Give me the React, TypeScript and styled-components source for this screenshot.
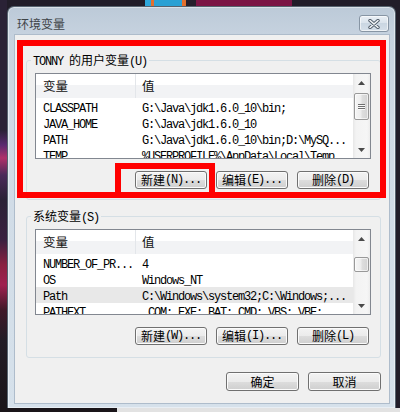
import React from "react";
import styled, { createGlobalStyle } from "styled-components";

const Global = createGlobalStyle`
  html, body { margin: 0; padding: 0; background: #1f1b27; }
  #root { width: 400px; height: 412px; overflow: hidden; }
  *, *::before, *::after { box-sizing: border-box; }
`;

const Desktop = styled.div`
  width: 400px;
  height: 412px;
  padding: 6px 4px 0 7px;
  background-color: #211d29;
  background-image:
    linear-gradient(90deg, transparent 0, transparent 145px, #2da6da 145px, #2da6da 151px, #e3702e 151px, #e3702e 154px, #2aa1d4 154px, #2aa1d4 182px, #e3702e 182px, #e3702e 186px, #261f2c 186px, #261f2c 196px, #7b1545 196px, #7b1545 292px, transparent 292px),
    linear-gradient(90deg, #1a1519 0, #1a1519 117px, #e2e2e2 117px, #e2e2e2 100%),
    linear-gradient(180deg, #2a2236 0, #2a2236 130px, #5a2a70 145px, #b0306a 158px, #4a2a5a 175px, #2a2236 200px, #3a2040 240px, #8a2040 265px, #a02050 285px, #401828 310px, #221c26 340px, #1a1519 100%);
  background-size: 100% 6px, 100% 4px, 7px 100%;
  background-position: left top, left bottom, left top;
  background-repeat: no-repeat;
`;

const Window = styled.div`
  width: 389px;
  height: 402px;
  display: flex;
  flex-direction: column;
  padding: 0 6px 5px 7px;
  border: 1px solid #56636f;
  border-bottom: none;
  border-radius: 7px 7px 0 0;
  background: linear-gradient(180deg, #bccad8 0, #c6d2df 28px, #cfdae5 120px, #d6e1eb 100%);
  box-shadow: inset 0 0 0 1px rgba(255, 255, 255, 0.45);
`;

const TitleBar = styled.div`
  height: 28px;
  flex: none;
  display: flex;
  align-items: flex-start;
  justify-content: space-between;
  padding: 8px 0 0 2px;
`;

const Title = styled.span`
  font-family: "Noto Sans CJK SC", sans-serif;
  font-size: 12px;
  line-height: 17px;
  color: #3e4347;
`;

const CloseButton = styled.div`
  width: 30px;
  height: 17px;
  border: 1px solid #8795a4;
  border-radius: 3px;
  background: linear-gradient(180deg, #e9eff5 0, #d9e2eb 50%, #cad6e2 50%, #d5dfe9 100%);
  box-shadow: inset 0 0 0 1px rgba(255, 255, 255, 0.6);
  display: flex;
  align-items: center;
  justify-content: center;
`;

const Client = styled.div`
  position: relative;
  flex: 1;
  background: #f0f0f0;
  box-shadow: 0 0 0 1px #aebccb;
  padding: 18px 8px 11px 11px;
  display: flex;
  flex-direction: column;
`;

const Group = styled.fieldset<{ $pb: number; $mt: number }>`
  margin: ${(p) => p.$mt}px 0 0 0;
  padding: 6px 9px ${(p) => p.$pb}px 8px;
  border: 1px solid #d5dfe5;
  border-radius: 3px;
  display: flex;
  flex-direction: column;
  gap: 12px;
  min-width: 0;
`;

const Legend = styled.legend`
  margin-left: -4px;
  padding: 0 2px;
  line-height: 14px;
  height: 14px;
  color: #000;
  white-space: nowrap;
`;

const Run = styled.span<{ $cjk: boolean }>`
  font-family: ${(p) => (p.$cjk ? '"Noto Sans CJK SC", sans-serif' : '"Liberation Mono", monospace')};
  font-size: ${(p) => (p.$cjk ? 12 : 12)}px;
  letter-spacing: ${(p) => (p.$cjk ? 0 : -1.2)}px;
`;

function Txt({ children }: { children: string }) {
  const parts = children.match(/[\u3000-\u9fff\uff00-\uffef]+|[^\u3000-\u9fff\uff00-\uffef]+/g) || [];
  return (
    <>
      {parts.map((p, i) => (
        <Run key={i} $cjk={/[\u3000-\u9fff\uff00-\uffef]/.test(p)}>
          {p}
        </Run>
      ))}
    </>
  );
}

const List = styled.div`
  height: 86px;
  flex: none;
  border: 1px solid #828790;
  background: #fff;
  display: flex;
  overflow: hidden;
`;

const ListBody = styled.div`
  flex: 1;
  min-width: 0;
  overflow: hidden;
  display: flex;
  flex-direction: column;
`;

const Header = styled.div`
  flex: none;
  height: 25px;
  display: grid;
  grid-template-columns: 100px 1fr;
  border-bottom: 1px solid #fff;
  background: linear-gradient(180deg, #ffffff 0, #ffffff 45%, #f2f3f5 45%, #f2f3f5 100%);
`;

const HeaderCell = styled.div<{ $divider?: boolean }>`
  font-family: "Noto Sans CJK SC", sans-serif;
  font-size: 12.5px;
  line-height: 24px;
  color: #111;
  padding-left: ${(p) => (p.$divider ? 7 : 6)}px;
  border-right: ${(p) => (p.$divider ? "1px solid #e3e6ea" : "none")};
`;

const Row = styled.div<{ $selected?: boolean }>`
  flex: none;
  height: 16px;
  display: grid;
  grid-template-columns: 100px 1fr;
  background: ${(p) => (p.$selected ? "#e8e8e8" : "transparent")};
`;

const Cell = styled.div<{ $first?: boolean }>`
  line-height: 16px;
  white-space: nowrap;
  overflow: hidden;
  color: #000;
  padding-left: ${(p) => (p.$first ? 7 : 6)}px;
`;

const ScrollBar = styled.div`
  width: 17px;
  flex: none;
  display: flex;
  flex-direction: column;
  background: linear-gradient(90deg, #e7e7e7 0, #f3f3f3 3px, #f6f6f6 14px, #ededed 17px);
`;

const Arrow = styled.div`
  height: 17px;
  flex: none;
  display: flex;
  align-items: center;
  justify-content: center;
`;

const Track = styled.div`
  flex: 1;
  min-height: 0;
`;

const Thumb = styled.div<{ $top: number; $h: number }>`
  margin: ${(p) => p.$top}px 1px 0 1px;
  height: ${(p) => p.$h}px;
  border: 1px solid #999;
  border-radius: 2px;
  background: linear-gradient(90deg, #f6f6f6 0, #ededed 45%, #dedede 55%, #d3d3d3 100%);
  box-shadow: inset 0 0 0 1px rgba(255, 255, 255, 0.6);
  display: flex;
  align-items: center;
  justify-content: center;
`;

const ButtonRow = styled.div<{ $pr: number }>`
  display: flex;
  justify-content: flex-end;
  gap: 9px;
  padding-right: ${(p) => p.$pr}px;
`;

const Button = styled.div<{ $w: number; $h: number }>`
  width: ${(p) => p.$w}px;
  height: ${(p) => p.$h}px;
  border: 1px solid #707070;
  border-radius: 3px;
  background: linear-gradient(180deg, #f3f3f3 0%, #ebebeb 50%, #dddddd 50%, #cfcfcf 100%);
  box-shadow: inset 0 0 0 1px #fbfbfb;
  color: #000;
  display: flex;
  align-items: center;
  justify-content: center;
  white-space: nowrap;
  line-height: 14px;
`;

const Footer = styled.div`
  margin-top: 14px;
  display: flex;
  justify-content: flex-end;
  gap: 9px;
`;

const Mark = styled.div<{ $x: number; $y: number; $w: number; $h: number }>`
  position: absolute;
  left: ${(p) => p.$x}px;
  top: ${(p) => p.$y}px;
  width: ${(p) => p.$w}px;
  height: ${(p) => p.$h}px;
  border: 6px solid #ff0000;
  pointer-events: none;
`;

const UpArrow = () => (
  <svg width="7" height="4" viewBox="0 0 7 4">
    <path d="M0 4 L3.5 0 L7 4 Z" fill="#4a4a4a" />
  </svg>
);
const DownArrow = () => (
  <svg width="7" height="4" viewBox="0 0 7 4">
    <path d="M0 0 L3.5 4 L7 0 Z" fill="#4a4a4a" />
  </svg>
);
const Grip = () => (
  <svg width="7" height="6" viewBox="0 0 7 6">
    <path d="M0 0.5 H7 M0 2.5 H7 M0 4.5 H7" stroke="#6f6f6f" strokeWidth="1" />
    <path d="M0 1.5 H7 M0 3.5 H7 M0 5.5 H7" stroke="#ffffff" strokeWidth="1" opacity="0.8" />
  </svg>
);

type Item = { name: string; value: string; selected?: boolean };

function ListView({ items, thumbTop, thumbH, grip }: { items: Item[]; thumbTop: number; thumbH: number; grip: boolean }) {
  return (
    <List>
      <ListBody>
        <Header>
          <HeaderCell $divider>变量</HeaderCell>
          <HeaderCell>值</HeaderCell>
        </Header>
        {items.map((it) => (
          <Row key={it.name} $selected={it.selected}>
            <Cell $first>
              <Txt>{it.name}</Txt>
            </Cell>
            <Cell>
              <Txt>{it.value}</Txt>
            </Cell>
          </Row>
        ))}
      </ListBody>
      <ScrollBar>
        <Arrow>
          <UpArrow />
        </Arrow>
        <Track>
          <Thumb $top={thumbTop} $h={thumbH}>{grip && <Grip />}</Thumb>
        </Track>
        <Arrow>
          <DownArrow />
        </Arrow>
      </ScrollBar>
    </List>
  );
}

const userVars: Item[] = [
  { name: "CLASSPATH", value: "G:\\Java\\jdk1.6.0_10\\bin;" },
  { name: "JAVA_HOME", value: "G:\\Java\\jdk1.6.0_10" },
  { name: "PATH", value: "G:\\Java\\jdk1.6.0_10\\bin;D:\\MySQ..." },
  { name: "TEMP", value: "%USERPROFILE%\\AppData\\Local\\Temp" },
];

const sysVars: Item[] = [
  { name: "NUMBER_OF_PR...", value: "4" },
  { name: "OS", value: "Windows_NT" },
  { name: "Path", value: "C:\\Windows\\system32;C:\\Windows;...", selected: true },
  { name: "PATHEXT", value: ".COM;.EXE;.BAT;.CMD;.VBS;.VBE;" },
];

export default function App() {
  return (
    <>
      <Global />
      <Desktop>
        <Window>
          <TitleBar>
            <Title>环境变量</Title>
            <CloseButton>
              <svg width="14" height="10" viewBox="0 0 14 10">
                <path d="M3 1.5 L11 8.5 M11 1.5 L3 8.5" stroke="#4f5b68" strokeWidth="3.4" strokeLinecap="round" />
                <path d="M3 1.5 L11 8.5 M11 1.5 L3 8.5" stroke="#f5f7f9" strokeWidth="1.6" strokeLinecap="round" />
              </svg>
            </CloseButton>
          </TitleBar>
          <Client>
            <Group $pb={10} $mt={0}>
              <Legend>
                <Txt>TONNY 的用户变量(U)</Txt>
              </Legend>
              <ListView items={userVars} thumbTop={2} thumbH={27} grip />
              <ButtonRow $pr={2}>
                <Button $w={72} $h={18}>
                  <Txt>新建(N)...</Txt>
                </Button>
                <Button $w={72} $h={18}>
                  <Txt>编辑(E)...</Txt>
                </Button>
                <Button $w={72} $h={18}>
                  <Txt>删除(D)</Txt>
                </Button>
              </ButtonRow>
            </Group>
            <Group $pb={12} $mt={9}>
              <Legend>
                <Txt>系统变量(S)</Txt>
              </Legend>
              <ListView items={sysVars} thumbTop={10} thumbH={15} grip={false} />
              <ButtonRow $pr={2}>
                <Button $w={72} $h={18}>
                  <Txt>新建(W)...</Txt>
                </Button>
                <Button $w={72} $h={18}>
                  <Txt>编辑(I)...</Txt>
                </Button>
                <Button $w={72} $h={18}>
                  <Txt>删除(L)</Txt>
                </Button>
              </ButtonRow>
            </Group>
            <Footer>
              <Button $w={73} $h={19}>
                <Txt>确定</Txt>
              </Button>
              <Button $w={73} $h={19}>
                <Txt>取消</Txt>
              </Button>
            </Footer>
            <Mark $x={2} $y={5} $w={369} $h={158} />
            <Mark $x={100} $y={128} $w={100} $h={35} />
          </Client>
        </Window>
      </Desktop>
    </>
  );
}
